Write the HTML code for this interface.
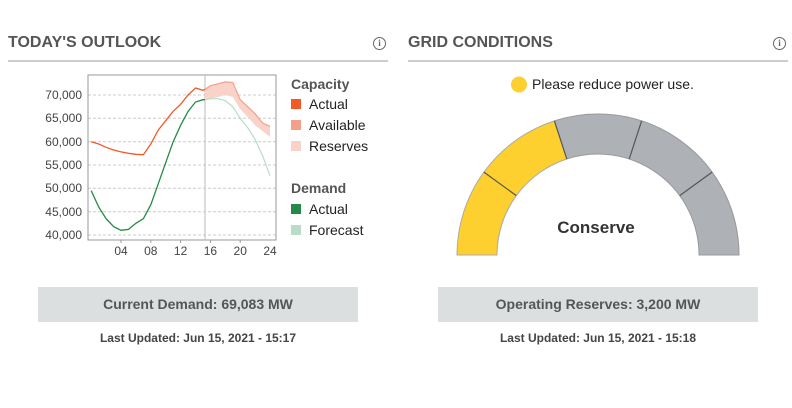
<!DOCTYPE html>
<html><head><style>
body{margin:0;width:792px;height:408px;background:#fff;font-family:"Liberation Sans",sans-serif;position:relative;overflow:hidden}
.h{position:absolute;top:34px;font-size:16px;font-weight:bold;color:#555}
.line{position:absolute;top:60px;height:2px;background:#ccc}
.box{position:absolute;top:287px;width:320px;height:35px;background:#dcdfe0;color:#555;font-size:14px;font-weight:bold;text-align:center;line-height:35px}
.upd{position:absolute;top:331px;width:320px;text-align:center;font-size:12px;font-weight:bold;color:#444}
.info{position:absolute;top:37px;width:11px;height:11px;border:1.3px solid #666;border-radius:50%;font-size:9px;font-weight:bold;color:#666;text-align:center;line-height:11px;font-family:"Liberation Serif",serif}
</style></head><body>
<div class="h" style="left:8px">TODAY'S OUTLOOK</div>
<div class="info" style="left:373px">i</div>
<div class="line" style="left:8px;width:380px"></div>
<div class="h" style="left:408px">GRID CONDITIONS</div>
<div class="info" style="left:773px">i</div>
<div class="line" style="left:408px;width:380px"></div>

<svg width="792" height="408" style="position:absolute;left:0;top:0" font-family="Liberation Sans, sans-serif">
<g stroke="#ccc" stroke-dasharray="3,2" stroke-width="1">
<line x1="88" x2="276" y1="95" y2="95"/><line x1="88" x2="276" y1="118.3" y2="118.3"/><line x1="88" x2="276" y1="141.7" y2="141.7"/><line x1="88" x2="276" y1="165" y2="165"/><line x1="88" x2="276" y1="188.3" y2="188.3"/><line x1="88" x2="276" y1="211.7" y2="211.7"/><line x1="88" x2="276" y1="235" y2="235"/>
</g>
<rect x="88" y="75" width="188" height="165" fill="none" stroke="#999"/>
<line x1="205" x2="205" y1="75" y2="240" stroke="#bbb"/>
<g font-size="12" fill="#444" text-anchor="end">
<text x="82" y="99">70,000</text><text x="82" y="122">65,000</text><text x="82" y="146">60,000</text><text x="82" y="169">55,000</text><text x="82" y="192">50,000</text><text x="82" y="216">45,000</text><text x="82" y="239">40,000</text>
</g>
<g font-size="12" fill="#444" text-anchor="middle">
<text x="121" y="255">04</text><text x="150.8" y="255">08</text><text x="180.6" y="255">12</text><text x="210.4" y="255">16</text><text x="240.2" y="255">20</text><text x="270" y="255">24</text>
</g>
<g stroke="#999" stroke-width="1"><line x1="121" x2="121" y1="240" y2="243"/><line x1="150.8" x2="150.8" y1="240" y2="243"/><line x1="180.6" x2="180.6" y1="240" y2="243"/><line x1="210.4" x2="210.4" y1="240" y2="243"/><line x1="240.2" x2="240.2" y1="240" y2="243"/></g>
<path d="M205,89.4 L210.4,85.7 217.9,83.8 225.3,81.9 232.8,82.4 240.2,99.7 247.7,106.7 255.1,113.7 262.6,123 270,126.3 L270,137 262.6,131 255.1,125.3 247.7,117 240.2,109 232.8,97 225.3,95 217.9,97 210.4,98.7 205,99.7Z" fill="#f9d3c8"/>
<path d="M205,89.4 L210.4,85.7 217.9,83.8 225.3,81.9 232.8,82.4 240.2,99.7 247.7,106.7 255.1,113.7 262.6,123 270,126.3" fill="none" stroke="#f4a088" stroke-width="1.2"/>
<path d="M205,99.7 L210.4,98.7 217.9,98.7 225.3,100.6 232.8,106.7 240.2,118.3 247.7,127.7 255.1,139.3 262.6,155.7 270,175.7" fill="none" stroke="#b9dcc6" stroke-width="1.2"/>
<path d="M91.2,141.7 L98.7,144 106.1,147.3 113.6,150 121,151.9 128.5,153.3 135.9,154.3 143.4,154.7 150.8,144 158.3,130 165.7,120.7 173.2,111.3 180.6,104.3 188.1,95 195.5,88 203,90.3 205,89.4" fill="none" stroke="#f05a28" stroke-width="1.3"/>
<path d="M91.2,190.7 L98.7,207 106.1,218.7 113.6,226.6 121,230.3 128.5,229.4 135.9,223.3 143.4,218.7 150.8,204.7 158.3,183.7 165.7,162.7 173.2,141.7 180.6,125.3 188.1,111.3 195.5,102 203,99.7 205,99.7" fill="none" stroke="#238a47" stroke-width="1.3"/>
<g font-size="14" fill="#222">
<text x="291" y="89" font-weight="bold" fill="#555">Capacity</text>
<rect x="291" y="99" width="10" height="10" fill="#f05a28"/><text x="309" y="109">Actual</text>
<rect x="291" y="120" width="10" height="10" fill="#f4a088"/><text x="309" y="130">Available</text>
<rect x="291" y="141" width="10" height="10" fill="#f9d3c8"/><text x="309" y="151">Reserves</text>
<text x="291" y="193" font-weight="bold" fill="#555">Demand</text>
<rect x="291" y="204" width="10" height="10" fill="#238a47"/><text x="309" y="214">Actual</text>
<rect x="291" y="225" width="10" height="10" fill="#b9dcc6"/><text x="309" y="235">Forecast</text>
</g>
<circle cx="519" cy="84.5" r="8" fill="#fdd02f"/>
<text x="532" y="89" font-size="14" fill="#222">Please reduce power use.</text>
<path d="M554.4,120.9 A141,141 0 0 1 739,255 L699,255 A101,101 0 0 0 566.8,159 Z" fill="#aeb2b7" stroke="#999" stroke-width="1"/>
<path d="M457,255 A141,141 0 0 1 554.4,120.9 L566.8,159 A101,101 0 0 0 497,255 Z" fill="#fdd02f" stroke="#aaa" stroke-width="1"/>
<g stroke="#555" stroke-width="1.2">
<line x1="483.9" y1="172.1" x2="516.3" y2="195.6"/><line x1="554.4" y1="120.9" x2="566.8" y2="159"/><line x1="641.6" y1="120.9" x2="629.2" y2="159"/><line x1="712.1" y1="172.1" x2="679.7" y2="195.6"/>
</g>
<text x="596" y="233" font-size="17" font-weight="bold" fill="#333" text-anchor="middle">Conserve</text>
</svg>
<div class="box" style="left:38px">Current Demand: 69,083 MW</div>
<div class="upd" style="left:38px">Last Updated: Jun 15, 2021 - 15:17</div>
<div class="box" style="left:438px">Operating Reserves: 3,200 MW</div>
<div class="upd" style="left:438px">Last Updated: Jun 15, 2021 - 15:18</div>
</body></html>
